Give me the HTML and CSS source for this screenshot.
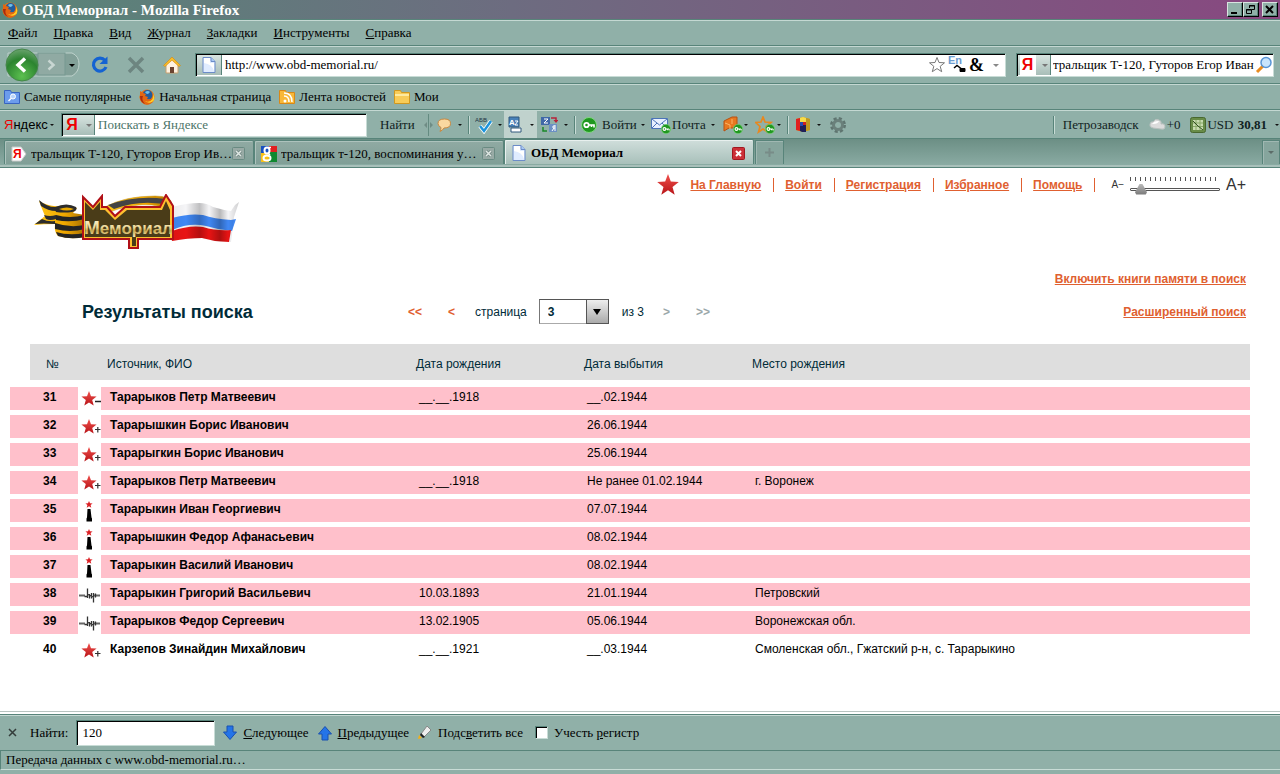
FILE: index.html
```html
<!DOCTYPE html>
<html lang="ru">
<head>
<meta charset="utf-8">
<title>ОБД Мемориал</title>
<link rel="stylesheet" href="styles.css">
</head>
<body>
<svg class="defs" aria-hidden="true">
  <defs>
    <linearGradient id="redg" x1="0" y1="0" x2="0" y2="1"><stop offset="0" stop-color="#f0504c"/><stop offset="1" stop-color="#b81418"/></linearGradient>
    <linearGradient id="gold" x1="0" y1="0" x2="0" y2="1"><stop offset="0" stop-color="#fff6d8"/><stop offset=".5" stop-color="#ecd898"/><stop offset=".65" stop-color="#c8a850"/><stop offset="1" stop-color="#fff0c0"/></linearGradient>
    <linearGradient id="ribbon" x1="0" y1="0" x2="1" y2="0"><stop offset="0" stop-color="#ffc818"/><stop offset=".6" stop-color="#f0a800"/><stop offset="1" stop-color="#a87000"/></linearGradient>
    <linearGradient id="wave" x1="0" y1="0" x2="1" y2="0"><stop offset="0" stop-opacity=".05"/><stop offset=".22" stop-opacity="0"/><stop offset=".42" stop-opacity=".22"/><stop offset=".56" stop-opacity="0"/><stop offset=".72" stop-opacity=".25"/><stop offset=".84" stop-opacity="0"/><stop offset="1" stop-opacity=".15"/></linearGradient>
    <radialGradient id="greeng" cx=".5" cy=".85" r=".9"><stop offset="0" stop-color="#5cc050"/><stop offset=".6" stop-color="#2c8430"/><stop offset="1" stop-color="#74a878"/></radialGradient>
  </defs>
  <symbol id="star" viewBox="0 0 22 22"><path d="M11 0l2.800 7.600 8 .3-6.300 5 2.200 7.900L11 16.300 4.300 20.800l2.200-7.900-6.300-5 8-.3z" fill="url(#redg)"/></symbol>
  <symbol id="star-minus" viewBox="0 0 22 22"><path d="M10 3l2 5.300 5.600.2-4.400 3.500 1.500 5.500-4.700-3.100-4.700 3.100 1.500-5.500-4.400-3.500 5.600-.2z" fill="url(#redg)"/><path d="M16 13.500h6" stroke="#222" stroke-width="1.500"/></symbol>
  <symbol id="star-plus" viewBox="0 0 22 22"><path d="M10 3l2 5.300 5.600.2-4.400 3.500 1.500 5.500-4.700-3.100-4.700 3.100 1.500-5.500-4.400-3.500 5.600-.2z" fill="url(#redg)"/><path d="M16 13.500h5.500M18.800 11v5.500" stroke="#333" stroke-width="1.200"/></symbol>
  <symbol id="obelisk" viewBox="0 0 22 22"><path d="M10 1l1 2.300 2.600.1-2 1.700.7 2.600L10 6.200 7.700 7.700l.7-2.600-2-1.700 2.600-.1z" fill="#dc2024"/><path d="M8.500 9h3l1 8.500.5 1v3H7.500v-3l.5-1z" fill="#000"/></symbol>
  <symbol id="wire" viewBox="0 0 22 22"><path d="M0 11.500h6M15 11.500h6" stroke="#666" stroke-width="2"/><path d="M5.500 12.500h3v-8M8.500 9v5M10.500 10v4.500M12.500 9v5.500M14.500 9v9.500M16.500 9.500v4M9 10.500l6 3" stroke="#333" stroke-width="1.300" fill="none"/></symbol>
  <symbol id="fox" viewBox="0 0 16 16"><circle cx="8" cy="8" r="7.500" fill="#ec7412"/><circle cx="8.500" cy="6" r="5" fill="#225c9c"/><path d="M6 3q3-2 5 0l-2 2-2-.5z" fill="#70c0e8"/><path d="M1 2l3 2 3 1-1 2 3 1-1 2 3 .5q3-1 3-6 3 7-2 10-5 3-9-1-3-3-2-7z" fill="#e46610"/><path d="M13.500 4q2 5-2 8-4 2-7-1 5 5 10 1 2-4-1-8" fill="#ffd028"/><path d="M1 7q0 6 5 8-4-4-2-8z" fill="#a82c10"/></symbol>
  <symbol id="page" viewBox="0 0 14 16"><path d="M1 .5h8l4 4v11H1z" fill="#e0ecff" stroke="#6c8cc8"/><path d="M9 .5v4h4" fill="#a8c8f4" stroke="#6c8cc8"/><path d="M2 1h6v5h4v8q-2-7-10-8z" fill="#fff"/></symbol>
  <symbol id="closex" viewBox="0 0 13 13"><rect x=".5" y=".5" width="12" height="12" rx="1" fill="#98aaa5" stroke="#698a82"/><path d="M4 4l5 5M9 4L4 9" stroke="#6f8580" stroke-width="3"/><path d="M4 4l5 5M9 4L4 9" stroke="#e0e8e4" stroke-width="1.500"/></symbol>
  <symbol id="keyb" viewBox="0 0 16 16"><circle cx="8" cy="8" r="7.500" fill="#209820" stroke="#80d880"/><circle cx="5.500" cy="8" r="2.200" fill="none" stroke="#fff" stroke-width="1.800"/><path d="M7.500 8H13v2.500M10.500 8v2" stroke="#fff" stroke-width="1.600" fill="none"/></symbol>
</svg>

<header class="titlebar">
  <svg class="i16"><use href="#fox"/></svg>
  <h1>ОБД Мемориал - Mozilla Firefox</h1>
  <button class="win" aria-label="Свернуть"><svg viewBox="0 0 14 12"><path d="M3 9h6" stroke="#000" stroke-width="2"/></svg></button>
  <button class="win" aria-label="Восстановить"><svg viewBox="0 0 14 12"><path d="M5.500 4V1.500h5v4H8M5 2h6M2.500 5.500h5v4h-5zM2 6h6" stroke="#000" fill="none"/></svg></button>
  <button class="win gap" aria-label="Закрыть"><svg viewBox="0 0 14 12"><path d="M3 2l7 7M10 2L3 9" stroke="#000" stroke-width="2"/></svg></button>
</header>

<nav class="bar menu">
  <button><u>Ф</u>айл</button><button><u>П</u>равка</button><button><u>В</u>ид</button><button><u>Ж</u>урнал</button><button><u>З</u>акладки</button><button><u>И</u>нструменты</button><button><u>С</u>правка</button>
</nav>

<div class="bar nav">
  <div class="history">
    <svg width="76" height="34" viewBox="0 0 76 34">
      <path d="M4 5h64q7 3 7 11t-7 12H4z" fill="#82a098" stroke="#bed2cc"/>
      <rect x="34" y="5" width="27" height="22" fill="#90aaa3" stroke="#769991"/>
      <circle cx="18" cy="17" r="16" fill="url(#greeng)" stroke="#46874a"/>
      <path d="M21 10.500l-7 6.500 7 6.500" fill="none" stroke="#fff" stroke-width="3.500"/>
      <path d="M44.500 12.500l5 4.500-5 4.500" fill="none" stroke="#c8d6d2" stroke-width="2.500"/>
      <path d="M65 16h6l-3 3z" fill="#000"/>
    </svg>
  </div>
  <button class="ico" aria-label="Обновить"><svg viewBox="0 0 18 18"><path d="M14 4.500A6.500 6.500 0 1 0 15 11" fill="none" stroke="#1463d2" stroke-width="3.200"/><path d="M16.500.5v7.500h-8z" fill="#1463d2"/></svg></button>
  <button class="ico" aria-label="Остановить"><svg viewBox="0 0 18 18"><path d="M2 2l14 14M16 2L2 16" stroke="#6d8580" stroke-width="3.500"/></svg></button>
  <button class="ico" aria-label="Домой"><svg viewBox="0 0 18 18"><path d="M3 9l6-6 6 6v8H3z" fill="#fff2e0" stroke="#c8a070"/><path d="M.5 9.500L9 1l8.500 8.500-1.500 1L9 4.200 2 10.500z" fill="#f8bc28" stroke="#d08810" stroke-width=".6"/><path d="M7 11h4v6H7z" fill="#6c4430"/></svg></button>
  <div class="field url">
    <span class="fieldbtn"><svg width="14" height="16"><use href="#page"/></svg></span>
    <input aria-label="Адрес" value="http://www.obd-memorial.ru/">
    <svg width="76" height="22" viewBox="0 0 76 22">
      <path d="M8 3.500l2 5 5.500.3-4.300 3.500 1.500 5.400L8 14.600l-4.700 3.100 1.500-5.400L.5 8.800 6 8.500z" fill="#fff" stroke="#777"/>
      <path d="M31 14.500h5v3h-5z" fill="#000" stroke="#000"/><path d="M25 14l3-2.500 4 3" fill="none" stroke="#000" stroke-width="1.500"/>
      <text x="19" y="10" class="en">En</text><text x="40" y="17" class="amp">&amp;</text>
      <path d="M64 10h6l-3 3z" fill="#888"/>
    </svg>
  </div>
  <div class="field search">
    <span class="fieldbtn ya"><b>Я</b><svg width="8" height="5" viewBox="0 0 8 5"><path d="M1 1h6L4 4z" fill="#777"/></svg></span>
    <input aria-label="Поиск" value="тральщик Т-120, Гуторов Егор Иван">
    <svg width="18" height="18" viewBox="0 0 18 18"><path d="M8 10l-6 6" stroke="#e88c20" stroke-width="3"/><circle cx="11" cy="6.500" r="5" fill="#c8e4fc" stroke="#5894d4" stroke-width="1.500"/></svg>
  </div>
</div>

<div class="bar bookmarks">
  <a href="#"><svg class="i16" viewBox="0 0 16 16"><path d="M.5 1.500h6l1 2h8v11H.5z" fill="#6c9cec" stroke="#3864c0"/><circle cx="9" cy="7.500" r="2.500" fill="#b8d4fc" stroke="#fff"/><path d="M7 9.500L4.500 12" stroke="#fff" stroke-width="1.500"/></svg>Самые популярные</a>
  <a href="#"><svg class="i16"><use href="#fox"/></svg>Начальная страница</a>
  <a href="#"><svg class="i16" viewBox="0 0 16 16"><path d="M.5 1.500h6l1 2h8v11H.5z" fill="#f8b838" stroke="#d88818"/><path d="M5 7q5 0 5 6M5 4q8 0 8 9" fill="none" stroke="#fff" stroke-width="1.500"/><circle cx="6" cy="12" r="1.500" fill="#fff"/></svg>Лента новостей</a>
  <a href="#"><svg class="i16" viewBox="0 0 16 16"><path d="M.5 1.500h6l1 2h8v11H.5z" fill="#f8cc58" stroke="#d09820"/><path d="M1 6h14" stroke="#fff4b8" stroke-width="1.500"/></svg>Мои</a>
</div>

<div class="bar yandex">
  <div class="tools">
    <span class="yalogo"><i>Я</i>ндекс</span>
    <span class="dot"></span>
    <div class="field">
      <span class="fieldbtn ya"><b>Я</b><svg width="8" height="5" viewBox="0 0 8 5"><path d="M1 1h6L4 4z" fill="#777"/></svg></span>
      <input aria-label="Поискать в Яндексе" placeholder="Поискать в Яндексе">
    </div>
    <button>Найти</button>
    <svg width="10" height="22" viewBox="0 0 10 22"><path d="M5.500 0v22" stroke="#648b81"/><path d="M4 8v6l-3-3zM7 8v6l3-3z" fill="#6f8c85"/></svg>
    <svg width="15" height="16" viewBox="0 0 15 16"><path d="M7.500 2q6 0 6 4.500T7 11q-1 2-4 3.500Q4 12 4 10.500 1 9 1 6.500 1 2 7.500 2" fill="#fad8a0" stroke="#c88840"/></svg>
    <span class="dot"></span><span class="sep"></span>
    <svg width="18" height="18" viewBox="0 0 18 18"><text x="0" y="6" class="tiny">АБВ</text><path d="M5 10l4 5 7-10" stroke="#fff" stroke-width="4" fill="none"/><path d="M5 10l4 5 7-10" stroke="#1c94dc" stroke-width="2.500" fill="none"/></svg>
    <span class="dot"></span>
    <span class="pressed"><svg width="16" height="18" viewBox="0 0 16 18"><path d="M4 12h10v4H4z" fill="#fff" stroke="#30587c"/><path d="M2 1h10v10H2z" fill="#4880b8" stroke="#30587c"/><text x="2" y="9" class="az">A</text><path d="M8 5h3L8 9h3" stroke="#fff" fill="none"/></svg><span class="dot"></span></span>
    <svg width="17" height="17" viewBox="0 0 17 17"><path d="M0 1h9v8H0z" fill="#4068a8"/><path d="M8 8h8v8H8z" fill="#6c90c4"/><path d="M3 3h4L3 7h4M14 10h-2v2h2M14 9v6M13 12l-2 3" stroke="#fff" fill="none"/><path d="M10 2h5v4" stroke="#b82038" stroke-width="1.500" fill="none"/><path d="M12.500 4h5L15 7z" fill="#b82038"/><path d="M6 15H2v-4" stroke="#188828" stroke-width="1.500" fill="none"/></svg>
    <span class="dot"></span><span class="sep"></span>
    <svg class="i16"><use href="#keyb"/></svg>
    <button>Войти</button><span class="dot"></span>
    <svg width="20" height="18" viewBox="0 0 20 18"><path d="M.5 2.500h16v10H.5z" fill="#e8f0ff" stroke="#4c74b8"/><path d="M1 3l7.500 6L16 3M1 12l5-5M16 12l-5-5" fill="none" stroke="#4c74b8"/><use href="#keyb" x="10" y="8" width="10" height="10"/></svg>
    <button>Почта</button><span class="dot"></span>
    <svg width="20" height="18" viewBox="0 0 20 18"><path d="M1 5l8-4h5v11H6l-5 3z" fill="#e87820" stroke="#b85010"/><path d="M2 7l5 2v4M9 3v5" stroke="#fcb468" fill="none"/><use href="#keyb" x="10" y="8" width="10" height="10"/></svg>
    <span class="dot"></span>
    <svg width="20" height="18" viewBox="0 0 20 18"><path d="M8 1l2 5 6 .5-5 4 1.500 5.500L8 13l-4.500 3L5 10.500 0.800 6.500 6 6z" fill="none" stroke="#e88820" stroke-width="1.700"/><use href="#keyb" x="10" y="8" width="10" height="10"/></svg>
    <span class="dot"></span><span class="sep"></span>
    <svg width="17" height="17" viewBox="0 0 17 17"><path d="M1 3l7-2 7 2v11l-7 2-7-2z" fill="#d8a818"/><path d="M1 3l4-1v13l-4-1z" fill="#e02020"/><path d="M5 9h6v7H7l-2-1z" fill="#202058"/><path d="M11 2l4 1v11l-4 1z" fill="#c09820"/><path d="M5 2l3-1 3 1v4H5z" fill="#f8dc48"/><path d="M5 6h3v4H5z" fill="#2848b0"/><path d="M8 6h3v3H8z" fill="#d02020"/></svg>
    <span class="dot"></span>
    <svg width="16" height="16" viewBox="0 0 16 16"><circle cx="8" cy="8" r="6.500" fill="none" stroke="#5f7570" stroke-width="3" stroke-dasharray="3 2.100"/><circle cx="8" cy="8" r="4.500" fill="none" stroke="#6a807b" stroke-width="3"/></svg>
  </div>
  <div class="info">
    <span class="sep"></span><span>Петрозаводск</span>
    <span class="pair"><svg width="17" height="14" viewBox="0 0 17 14"><path d="M4 10Q0 9 1 6q1-3 3-2 2-4 6-2 3 1 2 4 4-1 4 3 0 3-4 2z" fill="#dcdcdc" stroke="#b8c0be"/><path d="M3 6q2-3 7-3-1 3-6 3" fill="#fff"/></svg>+0</span>
    <span class="pair"><svg class="i16" viewBox="0 0 16 16"><rect x=".5" y=".5" width="15" height="15" rx="2" fill="#688c48" stroke="#486830"/><path d="M3 3h10v10H3z" fill="#c8dcb0"/><path d="M3 6h10M3 9.500h10M6 3v10M10 3v10" stroke="#88a868"/><path d="M3 4l4 4 1 1 5 4" stroke="#304c20" fill="none"/></svg>USD <b>30,81</b></span>
    <span class="dot"></span>
  </div>
</div>

<div class="tabs" role="tablist">
  <div class="tab" role="tab"><svg class="i16" viewBox="0 0 16 16"><path d="M1 1h9l5 7-5 7H1z" fill="#fff" stroke="#ccc"/><text x="2" y="12" class="yr">Я</text></svg><span>тральщик Т-120, Гуторов Егор Ив…</span><button aria-label="Закрыть вкладку"><svg><use href="#closex"/></svg></button></div>
  <div class="tab" role="tab"><svg class="i16" viewBox="0 0 16 16"><path d="M0 0h8v7H0z" fill="#1850c0"/><path d="M8 0h8v6H8z" fill="#e02020"/><path d="M8 6h8v10H8z" fill="#108830"/><path d="M0 7h8v9H0z" fill="#f8c018"/><ellipse cx="6" cy="4.500" rx="2.500" ry="3" fill="none" stroke="#fff" stroke-width="2"/><ellipse cx="6" cy="12" rx="3.500" ry="2.500" fill="none" stroke="#fff" stroke-width="2"/><path d="M7 7l2 2M7 1.500h3" stroke="#fff" stroke-width="1.500"/></svg><span>тральщик т-120, воспоминания у…</span><button aria-label="Закрыть вкладку"><svg><use href="#closex"/></svg></button></div>
  <div class="tab active" role="tab"><svg class="i16"><use href="#page"/></svg><span>ОБД Мемориал</span><button aria-label="Закрыть вкладку"><svg viewBox="0 0 13 13"><rect x=".5" y=".5" width="12" height="12" rx="1" fill="#cc3038" stroke="#a01820"/><path d="M4 4l5 5M9 4L4 9" stroke="#fff" stroke-width="2"/></svg></button></div>
  <button class="newtab" aria-label="Новая вкладка"><svg width="9" height="9" viewBox="0 0 9 9"><path d="M4.500 0v9M0 4.500h9" stroke="#788c88" stroke-width="2"/></svg></button>
  <button class="alltabs" aria-label="Список вкладок"><svg width="8" height="5" viewBox="0 0 8 5"><path d="M1 1h6L4 4z" fill="#5c6c68"/></svg></button>
</div>

<main>
  <div class="head">
    <svg class="logo" width="208" height="60" viewBox="0 0 208 60" role="img" aria-label="Мемориал">
      <path d="M6 7q10 6 20 5 11-2 18 2l-4 5 12 2v22q-14 3-27-1-4-4-3-12Q10 30 1 31q6-5 11-9Q9 15 6 7" fill="url(#ribbon)"/>
      <path d="M6 6q9 8 18 7l-1 4q-8 0-15-5zM11 21q6 2 12 0v4q-6 2-10 0zM2 30q4-3 7-5 6 3 13 2v3Q10 29 2 30z" fill="#2c2c2c"/>
      <path d="M22 13q12-5 21 0 2 4-4 5-8 1-16 0-2-3-1-5" fill="#2c2c2c"/><path d="M26 15q8-3 15 0-7 3-15 0" fill="#e8a800"/>
      <path d="M23 21q13 4 29 0v4q-15 4-29 1zM22 29q14 5 30 2v4q-15 4-30 0zM23 38q13 4 29 1v4q-15 3-27-1z" fill="#242424"/>
      <path d="M72 13q20-11 50-11 16 0 17 8l-3 6q-15-8-38-4-12 2-24 7z" fill="url(#ribbon)" stroke="#c09020" stroke-width=".5"/>
      <path d="M75 11Q103 1 132 5l6 3v4q-27-8-57 3z" fill="#444"/>
      <path d="M139 13q15-4 27-4 8 0 14 4 10 3 18 4l4-6 4-3-5 15-3 25-17-1-12-3q-14 0-31 3z" fill="#f5f5f7"/>
      <path d="M139 24q18-5 31-3 11 4 28 5l5-1-4 12q-13-1-26-5-16-4-34 4z" fill="#4088f4"/>
      <path d="M139 37q17-6 31-4 13 4 28 3l-2 12-14-1-13-3q-14 0-30 3z" fill="#e81414"/>
      <path d="M139 13q15-4 27-4 8 0 14 4 10 3 18 4l4-6 4-3-5 15-3 25-17-1-12-3q-14 0-31 3z" fill="url(#wave)"/>
      <path d="M50 3l10 10L69 2v11h5l8 9 10-9h35l6-12 7 11v33h-35v9H96v-9H50z" fill="#ffc030" stroke="#b01018" stroke-width="2"/>
      <path d="M52 8l8 8 7-8v8h5l10 10 12-10h35l4-9 4 9v27h-34v9H99v-9H52z" fill="#4a3c18"/>
      <text x="51" y="40" class="logotext"><tspan class="big">М</tspan>емориал</text>
    </svg>
    <nav class="links">
      <svg width="22" height="22"><use href="#star"/></svg>
      <a href="#">На Главную</a><a href="#">Войти</a><a href="#">Регистрация</a><a href="#">Избранное</a><a href="#">Помощь</a>
      <label class="zoom"><span class="small">A−</span><input type="range" min="0" max="10" value="0" aria-label="Размер шрифта"><span class="large">A+</span></label>
    </nav>
  </div>
  <div class="extra"><a href="#">Включить книги памяти в поиск</a></div>
  <div class="results">
    <h2>Результаты поиска</h2>
    <div class="pager">
      <a href="#">&lt;&lt;</a><a href="#">&lt;</a><label for="pg">страница</label>
      <span class="pick"><select id="pg"><option>1</option><option>2</option><option selected>3</option></select><span class="arrow"></span></span>
      <span class="of">из 3</span><span class="off">&gt;</span><span class="off">&gt;&gt;</span>
    </div>
    <a href="#">Расширенный поиск</a>
  </div>
  <table>
    <colgroup><col class="c-in"><col class="c-no"><col class="c-ic"><col class="c-name"><col class="c-date"><col class="c-date"><col></colgroup>
    <thead><tr><td class="blank"></td><th class="no">№</th><th></th><th>Источник, ФИО</th><th>Дата рождения</th><th>Дата выбытия</th><th>Место рождения</th></tr></thead>
    <tbody>
      <tr><td colspan="2" class="num">31</td><td class="kind"><svg><use href="#star-minus"/></svg></td><td class="name">Тарарыков Петр Матвеевич</td><td>__.__.1918</td><td>__.02.1944</td><td></td></tr>
      <tr><td colspan="2" class="num">32</td><td class="kind"><svg><use href="#star-plus"/></svg></td><td class="name">Тарарышкин Борис Иванович</td><td></td><td>26.06.1944</td><td></td></tr>
      <tr><td colspan="2" class="num">33</td><td class="kind"><svg><use href="#star-plus"/></svg></td><td class="name">Тарарыгкин Борис Иванович</td><td></td><td>25.06.1944</td><td></td></tr>
      <tr><td colspan="2" class="num">34</td><td class="kind"><svg><use href="#star-plus"/></svg></td><td class="name">Тарарыков Петр Матвеевич</td><td>__.__.1918</td><td>Не ранее 01.02.1944</td><td>г. Воронеж</td></tr>
      <tr><td colspan="2" class="num">35</td><td class="kind"><svg><use href="#obelisk"/></svg></td><td class="name">Тарарыкин Иван Георгиевич</td><td></td><td>07.07.1944</td><td></td></tr>
      <tr><td colspan="2" class="num">36</td><td class="kind"><svg><use href="#obelisk"/></svg></td><td class="name">Тарарышкин Федор Афанасьевич</td><td></td><td>08.02.1944</td><td></td></tr>
      <tr><td colspan="2" class="num">37</td><td class="kind"><svg><use href="#obelisk"/></svg></td><td class="name">Тарарыкин Василий Иванович</td><td></td><td>08.02.1944</td><td></td></tr>
      <tr><td colspan="2" class="num">38</td><td class="kind"><svg><use href="#wire"/></svg></td><td class="name">Тарарыкин Григорий Васильевич</td><td>10.03.1893</td><td>21.01.1944</td><td>Петровский</td></tr>
      <tr><td colspan="2" class="num">39</td><td class="kind"><svg><use href="#wire"/></svg></td><td class="name">Тарарыков Федор Сергеевич</td><td>13.02.1905</td><td>05.06.1944</td><td>Воронежская обл.</td></tr>
      <tr class="plain"><td colspan="2" class="num">40</td><td class="kind"><svg><use href="#star-plus"/></svg></td><td class="name">Карзепов Зинайдин Михайлович</td><td>__.__.1921</td><td>__.03.1944</td><td>Смоленская обл., Гжатский р-н, с. Тарарыкино</td></tr>
    </tbody>
  </table>
</main>

<div class="find">
  <button aria-label="Закрыть"><svg width="9" height="9" viewBox="0 0 9 9"><path d="M1 1l7 7M8 1L1 8" stroke="#333c3a" stroke-width="1.500"/></svg></button>
  <label for="q">Найти:</label>
  <input id="q" class="q" value="120">
  <button><svg width="14" height="16" viewBox="0 0 14 16"><path d="M4 1h6v6h3.500L7 14.500.5 7H4z" fill="#2474e8" stroke="#1850b0"/></svg><span><u>С</u>ледующее</span></button>
  <button><svg width="14" height="16" viewBox="0 0 14 16"><path d="M4 15h6V9h3.500L7 1.500.5 9H4z" fill="#2474e8" stroke="#1850b0"/></svg><span><u>П</u>редыдущее</span></button>
  <button><svg width="14" height="16" viewBox="0 0 14 16"><path d="M9 1l4 4-7 7-3-3z" fill="#eee" stroke="#888"/><path d="M3 8l4 4-2 1-3-3z" fill="#222"/><path d="M1 10l3 3-4 1z" fill="#f8b010"/></svg><span>Подс<u>в</u>етить все</span></button>
  <label class="check"><input type="checkbox"><span>Учесть <u>р</u>егистр</span></label>
</div>
<footer><span>Передача данных с www.obd-memorial.ru…</span></footer>
</body>
</html>
```
FILE: styles.css
```css
* { box-sizing: border-box; }
body {
  margin: 0; min-height: 100vh; display: flex; flex-direction: column;
  background: #90b0a8; color: #000;
  font: 13px/16px "Liberation Serif", serif;
}
button, input, select { font: inherit; color: inherit; margin: 0; }
button { background: none; border: 0; padding: 0; white-space: nowrap; }
svg { display: block; flex: none; }
.defs { position: absolute; width: 0; height: 0; }
.i16 { width: 16px; height: 16px; }

.titlebar {
  display: flex; align-items: center; height: 19px; padding: 0 2px;
  background: linear-gradient(90deg, #588678, #6d6c80 40%, #884880);
}
.titlebar h1 { margin: 0 auto 0 4px; color: #fff; font-size: 15px; line-height: 18px; }
.win { width: 16px; height: 15px; background: #90b0a8; border: 1px solid; border-color: #d8e4e0 #000 #000 #d8e4e0; box-shadow: inset -1px -1px #58847a; }
.win svg { width: 14px; height: 12px; }
.win + .gap { margin-left: 3px; }

.bar { display: flex; align-items: center; border-top: 1px solid #58847a; box-shadow: inset 0 1px #c4d8d2; }
.menu { height: 26px; padding: 0 8px; gap: 16px; }
.nav { height: 38px; padding: 0 6px 0 4px; }
.history { width: 76px; margin-right: 11px; }
.ico { width: 18px; margin-right: 18px; }
.ico svg { width: 18px; height: 18px; }
.field {
  display: flex; align-items: center; height: 24px; background: #fff; min-width: 0;
  border: 1px solid; border-color: #58847a #c8dcd6 #c8dcd6 #58847a; box-shadow: inset 1px 1px #000;
}
.field input { flex: 1; min-width: 0; width: 0; height: 20px; padding: 0 3px; border: 0; background: none; outline: 0; }
.fieldbtn {
  display: flex; align-items: center; justify-content: center; gap: 5px; width: 25px; height: 20px; margin: 1px 0 0 1px;
  background: linear-gradient(#d8e4e0, #a8beb8); border-right: 1px solid #58847a;
}
.fieldbtn.ya { width: 33px; flex: none; }
.ya b { color: #e00; background: #fff; width: 16px; text-align: center; font: bold 16px/20px "Liberation Sans", sans-serif; }
.yandex .ya b { background: none; }
.ico + .url { flex: 1; margin: 0 10px 0 -4px; }
.search { width: 258px; }
.search input { padding: 0 0 0 2px; }
.en { font: bold 11px "Liberation Sans", sans-serif; fill: #6c9cd0; }
.amp { font: bold 18px "Liberation Serif", serif; }

.bookmarks { height: 26px; padding: 0 4px; gap: 8px; }
.bookmarks a { display: flex; gap: 4px; color: inherit; text-decoration: none; }

.yandex { justify-content: space-between; height: 29px; padding: 1px 0 0 4px; }
.tools {
  display: grid; align-items: center; justify-items: start;
  grid-template-columns: 46px 11px 319px 43px 14px 21px 10px 7px 23px 6px 37px 23px 10px 7px 21px 39px 10px 21px 39px 12px 21px 11px 22px 10px 8px 22px 13px 16px;
}
.tools .field { width: 306px; }
.tools .fieldbtn { width: 32px; }
.tools ::placeholder { color: #4c7468; opacity: 1; }
.tools button, .info { color: #122; }
.yalogo { font: 13px/20px "Liberation Sans", sans-serif; }
.yalogo i { color: #e00; font-style: normal; }
.dot { width: 4px; border: 2px solid transparent; border-top-color: #111; border-bottom: 0; }
.sep { width: 2px; height: 18px; border-left: 1px solid #58847a; border-right: 1px solid #c8dcd6; }
.pressed { display: flex; align-items: center; gap: 7px; width: 33px; height: 27px; padding: 0 3px; background: #c0d2cd; }
.tiny { font: 6px "Liberation Sans", sans-serif; fill: #234; }
.az { font: bold 8px "Liberation Sans", sans-serif; fill: #fff; }
.info { display: flex; align-items: center; gap: 8px; padding-right: 1px; }
.pair { display: flex; align-items: center; gap: 1px; margin-left: 2px; white-space: pre; }

.tabs {
  display: flex; align-items: flex-end; height: 30px; padding: 0 0 3px 4px;
  border-top: 1px solid #58847a; border-bottom: 1px solid #58847a;
  background: linear-gradient(transparent 26px, #a8c0ba 26px), linear-gradient(#6c8f85, #8cada5);
}
.tab {
  display: flex; align-items: center; gap: 4px; flex: 0 1 250px; min-width: 0; height: 24px; padding: 2px 8px 0 6px;
  border: 1px solid #58847a; border-bottom: 0; border-radius: 2px 2px 0 0; box-shadow: inset 1px 1px #adc3bd;
  background: linear-gradient(#90aaa3, #809f97);
}
.tab span { flex: 1; overflow: hidden; white-space: nowrap; }
.tab button { margin-left: -4px; }
.tab button svg { width: 13px; height: 13px; }
.tab.active { height: 25px; font-weight: bold; background: linear-gradient(#d0dedb, #a8c0ba); box-shadow: inset 1px 1px #e8f0ee; }
.newtab, .alltabs { display: flex; align-items: center; justify-content: center; height: 24px; border: 1px solid #58847a; border-bottom: 0; box-shadow: inset 1px 1px #a0b8b2; background: #86a59d; }
.newtab { width: 29px; margin-left: 1px; }
.alltabs { width: 18px; margin-left: auto; }
.yr { font: bold 12px "Liberation Sans", sans-serif; fill: #e00; }

main { flex: 1; background: #fff; padding-bottom: 20px; border-bottom: 1px solid #b8c4c0; font: 12px/20px "Liberation Sans", Arial, sans-serif; color: #002b38; }
main a { color: #e06030; }
.head { display: flex; justify-content: space-between; padding: 6px 34px 0 33px; height: 101px; }
.logo { margin-top: 20px; }
.logotext { font: bold 17px "Liberation Sans", sans-serif; fill: url(#gold); }
.logotext .big { font-size: 19px; }
.links { display: flex; align-items: center; height: 22px; font-weight: bold; }
.links a { padding: 0 12px 0 11px; line-height: 14px; border-right: 1px solid #e06030; }
.zoom { display: flex; align-items: center; gap: 6px; margin-left: 16px; color: #333; font-weight: normal; }
.small { font-size: 10px; }
.large { font-size: 16px; }
.zoom input {
  appearance: none; width: 90px; height: 22px; padding-top: 8px;
  background:
    repeating-linear-gradient(90deg, #555 0 1px, transparent 1px 5px) 0 3px / 100% 4px no-repeat;
}
.zoom input::-webkit-slider-runnable-track { height: 3px; border: 1px solid #555; border-radius: 1px; }
.zoom input::-webkit-slider-thumb { appearance: none; width: 12px; height: 11px; margin: -5px 0 0 4px; background: linear-gradient(#bbb, #777); clip-path: polygon(40% 0, 60% 0, 100% 80%, 90% 100%, 10% 100%, 0 80%); }
.extra { padding: 0 34px; text-align: right; font-weight: bold; }
.results { display: flex; align-items: center; height: 45px; padding: 0 34px 0 82px; }
.results > a { margin-left: auto; font-weight: bold; }
h2 { flex: 0 0 326px; margin: 0; font-size: 18px; line-height: 24px; }
.pager { display: flex; align-items: center; }
.pager a { text-decoration: none; font-weight: bold; margin-right: 26px; }
.pager a + a { margin-right: 20px; }
.pick { position: relative; margin: 0 13px 0 12px; }
select { display: block; appearance: none; width: 70px; height: 25px; padding: 0 8px; border: 1px solid #aaa; border-top-color: #555; border-left-color: #777; border-radius: 0; background: #fff; font-weight: bold; }
.arrow { position: absolute; top: 0; right: 0; width: 23px; height: 25px; border: 1px solid #555; background: linear-gradient(#eee, #aaa); pointer-events: none; }
.arrow::after { content: ""; display: block; margin: 9px auto 0; width: 0; border: 4px solid transparent; border-top: 6px solid #000; border-bottom: 0; }
.off { margin-left: 19px; color: #9aa8aa; font-weight: bold; }
.off + .off { margin-left: 26px; }

table { width: calc(100% - 40px); margin: 5px 30px 0 10px; border-collapse: separate; border-spacing: 0 5px; table-layout: fixed; }
.c-in { width: 20px; } .c-no { width: 48px; } .c-ic { width: 23px; } .c-name { width: 309px; } .c-date { width: 168px; }
th { height: 38px; padding: 3px 6px 0; text-align: left; font-weight: normal; background: #dedede; background-clip: padding-box; border-bottom: 2px solid #fff; }
th.no { padding-left: 16px; }
td { height: 23px; padding: 0 9px 3px; background: #ffc0cb; color: #000; white-space: nowrap; }
.blank, .kind, .plain td { background: none; }
.blank { padding: 0; }
.num { padding-left: 33px; }
.num, .name { font-weight: bold; }
.kind { padding: 0 0 0 1px; }
.kind svg { width: 22px; height: 22px; }

.find { display: flex; align-items: center; height: 36px; margin-top: 2px; padding: 0 8px; border-top: 1px solid #58847a; box-shadow: inset 0 1px #c4d8d2, 0 -2px #fff; }
.find > button { display: flex; align-items: center; gap: 6px; margin-right: 9px; }
.find > button:first-child { margin-right: 13px; }
.q { width: 139px; height: 26px; margin: 0 8px; padding: 0 5px; border: 1px solid; border-color: #58847a #c8dcd6 #c8dcd6 #58847a; box-shadow: inset 1px 1px #000; background: #fff; outline: 0; }
.check { display: flex; align-items: center; gap: 6px; margin-left: 3px; }
.check input { appearance: none; width: 13px; height: 13px; background: #fff; border: 1px solid; border-color: #58847a #c8dcd6 #c8dcd6 #58847a; box-shadow: inset 1px 1px #000; }
footer { height: 24px; border-top: 1px solid #58847a; padding: 0 0 5px; }
footer span { display: block; height: 19px; padding: 1px 5px; border-left: 1px solid #58847a; border-bottom: 1px solid #c8dcd6; }
```
